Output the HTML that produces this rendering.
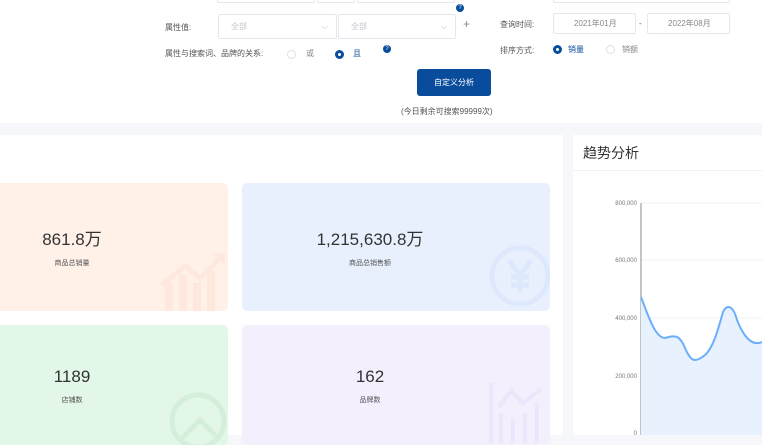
<!DOCTYPE html>
<html><head><meta charset="utf-8"><style>
*{margin:0;padding:0;box-sizing:border-box}
body{width:762px;height:435px;overflow:hidden;background:#f5f7fa;font-family:"Liberation Sans","Noto Sans CJK SC",sans-serif;position:relative;color:#333}
.a{position:absolute}
.top{left:0;top:0;width:762px;height:123px;background:#fff}
.inp{position:absolute;border:1px solid #e4e7ed;background:#fff;border-radius:2px;font-size:8px;color:#c0c4cc;padding-left:12px;line-height:24px}
.lbl{position:absolute;font-size:8px;color:#555}
.q{position:absolute;width:8px;height:8px;border-radius:50%;background:#0a4c9c;color:#fff;font-size:6px;text-align:center;line-height:8px}
.r{position:absolute;width:9px;height:9px;border-radius:50%;border:1px solid #dcdfe6;background:#fff}
.r.on{border:3px solid #0a4c9c}
.card{position:absolute;border-radius:5px;text-align:center;overflow:hidden}
.num{font-size:17px;color:#333}
.sub{font-size:7px;color:#555;margin-top:8px}
</style></head><body>
<div class="a top"></div>
<div class="inp" style="left:217px;top:-20px;width:98px;height:23px"></div>
<div class="inp" style="left:317px;top:-20px;width:38px;height:23px"></div>
<div class="inp" style="left:357px;top:-20px;width:98px;height:23px"></div>
<div class="inp" style="left:553px;top:-20px;width:177px;height:23px"></div>
<div class="q" style="left:456px;top:4px">?</div>
<div class="lbl" style="left:165px;top:22px">属性值:</div>
<div class="inp" style="left:218px;top:14px;width:119px;height:25px">全部<span style="position:absolute;right:8px;color:#bbb">⌵</span></div>
<div class="inp" style="left:338px;top:14px;width:118px;height:25px">全部<span style="position:absolute;right:8px;color:#bbb">⌵</span></div>
<div class="lbl" style="left:463px;top:17px;font-size:12px;color:#888">+</div>
<div class="lbl" style="left:165px;top:48px">属性与搜索词、品牌的关系:</div>
<div class="r" style="left:287px;top:50px"></div>
<div class="lbl" style="left:306px;top:48px;color:#888">或</div>
<div class="r on" style="left:335px;top:50px"></div>
<div class="lbl" style="left:353px;top:48px;color:#0a4c9c">且</div>
<div class="q" style="left:383px;top:45px">?</div>
<div class="a" style="left:417px;top:69px;width:74px;height:27px;background:#0a4c9c;border-radius:3px;color:#fff;font-size:8px;text-align:center;line-height:27px">自定义分析</div>
<div class="lbl" style="left:401px;top:106px;color:#555">(今日剩余可搜索99999次)</div>
<div class="lbl" style="left:500px;top:19px">查询时间:</div>
<div class="inp" style="left:553px;top:13px;width:83px;height:21px;line-height:19px;color:#888;padding-left:20px">2021年01月</div>
<div class="lbl" style="left:639px;top:19px">-</div>
<div class="inp" style="left:647px;top:13px;width:83px;height:21px;line-height:19px;color:#888;padding-left:20px">2022年08月</div>
<div class="lbl" style="left:500px;top:45px">排序方式:</div>
<div class="r on" style="left:553px;top:45px"></div>
<div class="lbl" style="left:568px;top:44px;color:#0a4c9c">销量</div>
<div class="r" style="left:606px;top:45px"></div>
<div class="lbl" style="left:622px;top:44px;color:#888">销额</div>

<div class="a" style="left:0;top:135px;width:563px;height:300px;background:#fff"></div>
<div class="card" style="left:-5px;top:183px;width:233px;height:128px;background:#fff0e8">
<div style="position:absolute;left:42px;top:42px;width:70px"><div class="num">861.8万</div><div class="sub">商品总销量</div></div>
<svg class="a" style="left:160px;top:70px" width="70" height="58"><g fill="#fee7dc"><rect x="10" y="30" width="8" height="28"/><rect x="24" y="22" width="8" height="36"/><rect x="38" y="30" width="8" height="28"/><rect x="52" y="18" width="8" height="40"/><path d="M5 30 L30 10 L45 22 L62 5 L58 1 L70 0 L70 12 L66 8 L45 28 L30 16 L9 34Z"/></g></svg>
</div>
<div class="card" style="left:242px;top:183px;width:308px;height:128px;background:#e8f0fe">
<div style="position:absolute;left:0;top:42px;width:256px"><div class="num">1,215,630.8万</div><div class="sub">商品总销售额</div></div>
<svg class="a" style="left:245px;top:60px" width="64" height="66"><circle cx="33" cy="33" r="28" fill="none" stroke="#dde8fc" stroke-width="5"/><path d="M22 18 L33 32 L44 18 M33 32 V50 M24 34 H42 M24 42 H42" fill="none" stroke="#dde8fc" stroke-width="5"/></svg>
</div>
<div class="card" style="left:-5px;top:325px;width:233px;height:120px;background:#e3f7e8">
<div style="position:absolute;left:42px;top:42px;width:70px"><div class="num">1189</div><div class="sub">店铺数</div></div>
<svg class="a" style="left:165px;top:60px" width="70" height="60"><circle cx="38" cy="36" r="26" fill="none" stroke="#d3eed9" stroke-width="5"/><path d="M20 55 L40 35 L60 55" fill="none" stroke="#d3eed9" stroke-width="5"/></svg>
</div>
<div class="card" style="left:242px;top:325px;width:308px;height:120px;background:#f4effd">
<div style="position:absolute;left:0;top:42px;width:256px"><div class="num">162</div><div class="sub">品牌数</div></div>
<svg class="a" style="left:245px;top:58px" width="60" height="60"><g fill="none" stroke="#ece5fb" stroke-width="4"><path d="M4 0 V60 M14 30 V60 M26 36 V60 M38 30 V60 M50 20 V60 M12 24 L24 8 L36 20 L54 6"/></g></svg>
</div>

<div class="a" style="left:573px;top:135px;width:189px;height:300px;background:#fff"></div>
<div class="a" style="left:573px;top:170px;width:189px;height:1px;background:#f0f2f5"></div>
<div class="a" style="left:583px;top:143px;font-size:14px;color:#333">趋势分析</div>
<svg class="a" style="left:573px;top:190px" width="189" height="245">
<g font-size="6" fill="#777" text-anchor="end" font-family="Liberation Sans">
<text x="64" y="15">800,000</text><text x="64" y="72">600,000</text><text x="64" y="130">400,000</text><text x="64" y="188">200,000</text><text x="64" y="245">0</text></g>
<g stroke="#f0f0f0"><line x1="68" y1="13" x2="189" y2="13"/><line x1="68" y1="70" x2="189" y2="70"/><line x1="68" y1="128" x2="189" y2="128"/><line x1="68" y1="186" x2="189" y2="186"/></g>
<line x1="68" y1="13" x2="68" y2="245" stroke="#888"/>
<path d="M68 107 C75 125 82 148 92 148 C100 146 106 143 112 158 C118 172 122 173 132 165 C140 158 145 140 150 122 C154 114 160 115 164 130 C170 145 178 157 189 152 L189 245 L68 245Z" fill="#e8f1fe"/>
<path d="M68 107 C75 125 82 148 92 148 C100 146 106 143 112 158 C118 172 122 173 132 165 C140 158 145 140 150 122 C154 114 160 115 164 130 C170 145 178 157 189 152" fill="none" stroke="#6aaefc" stroke-width="2"/>
</svg>
</body></html>
